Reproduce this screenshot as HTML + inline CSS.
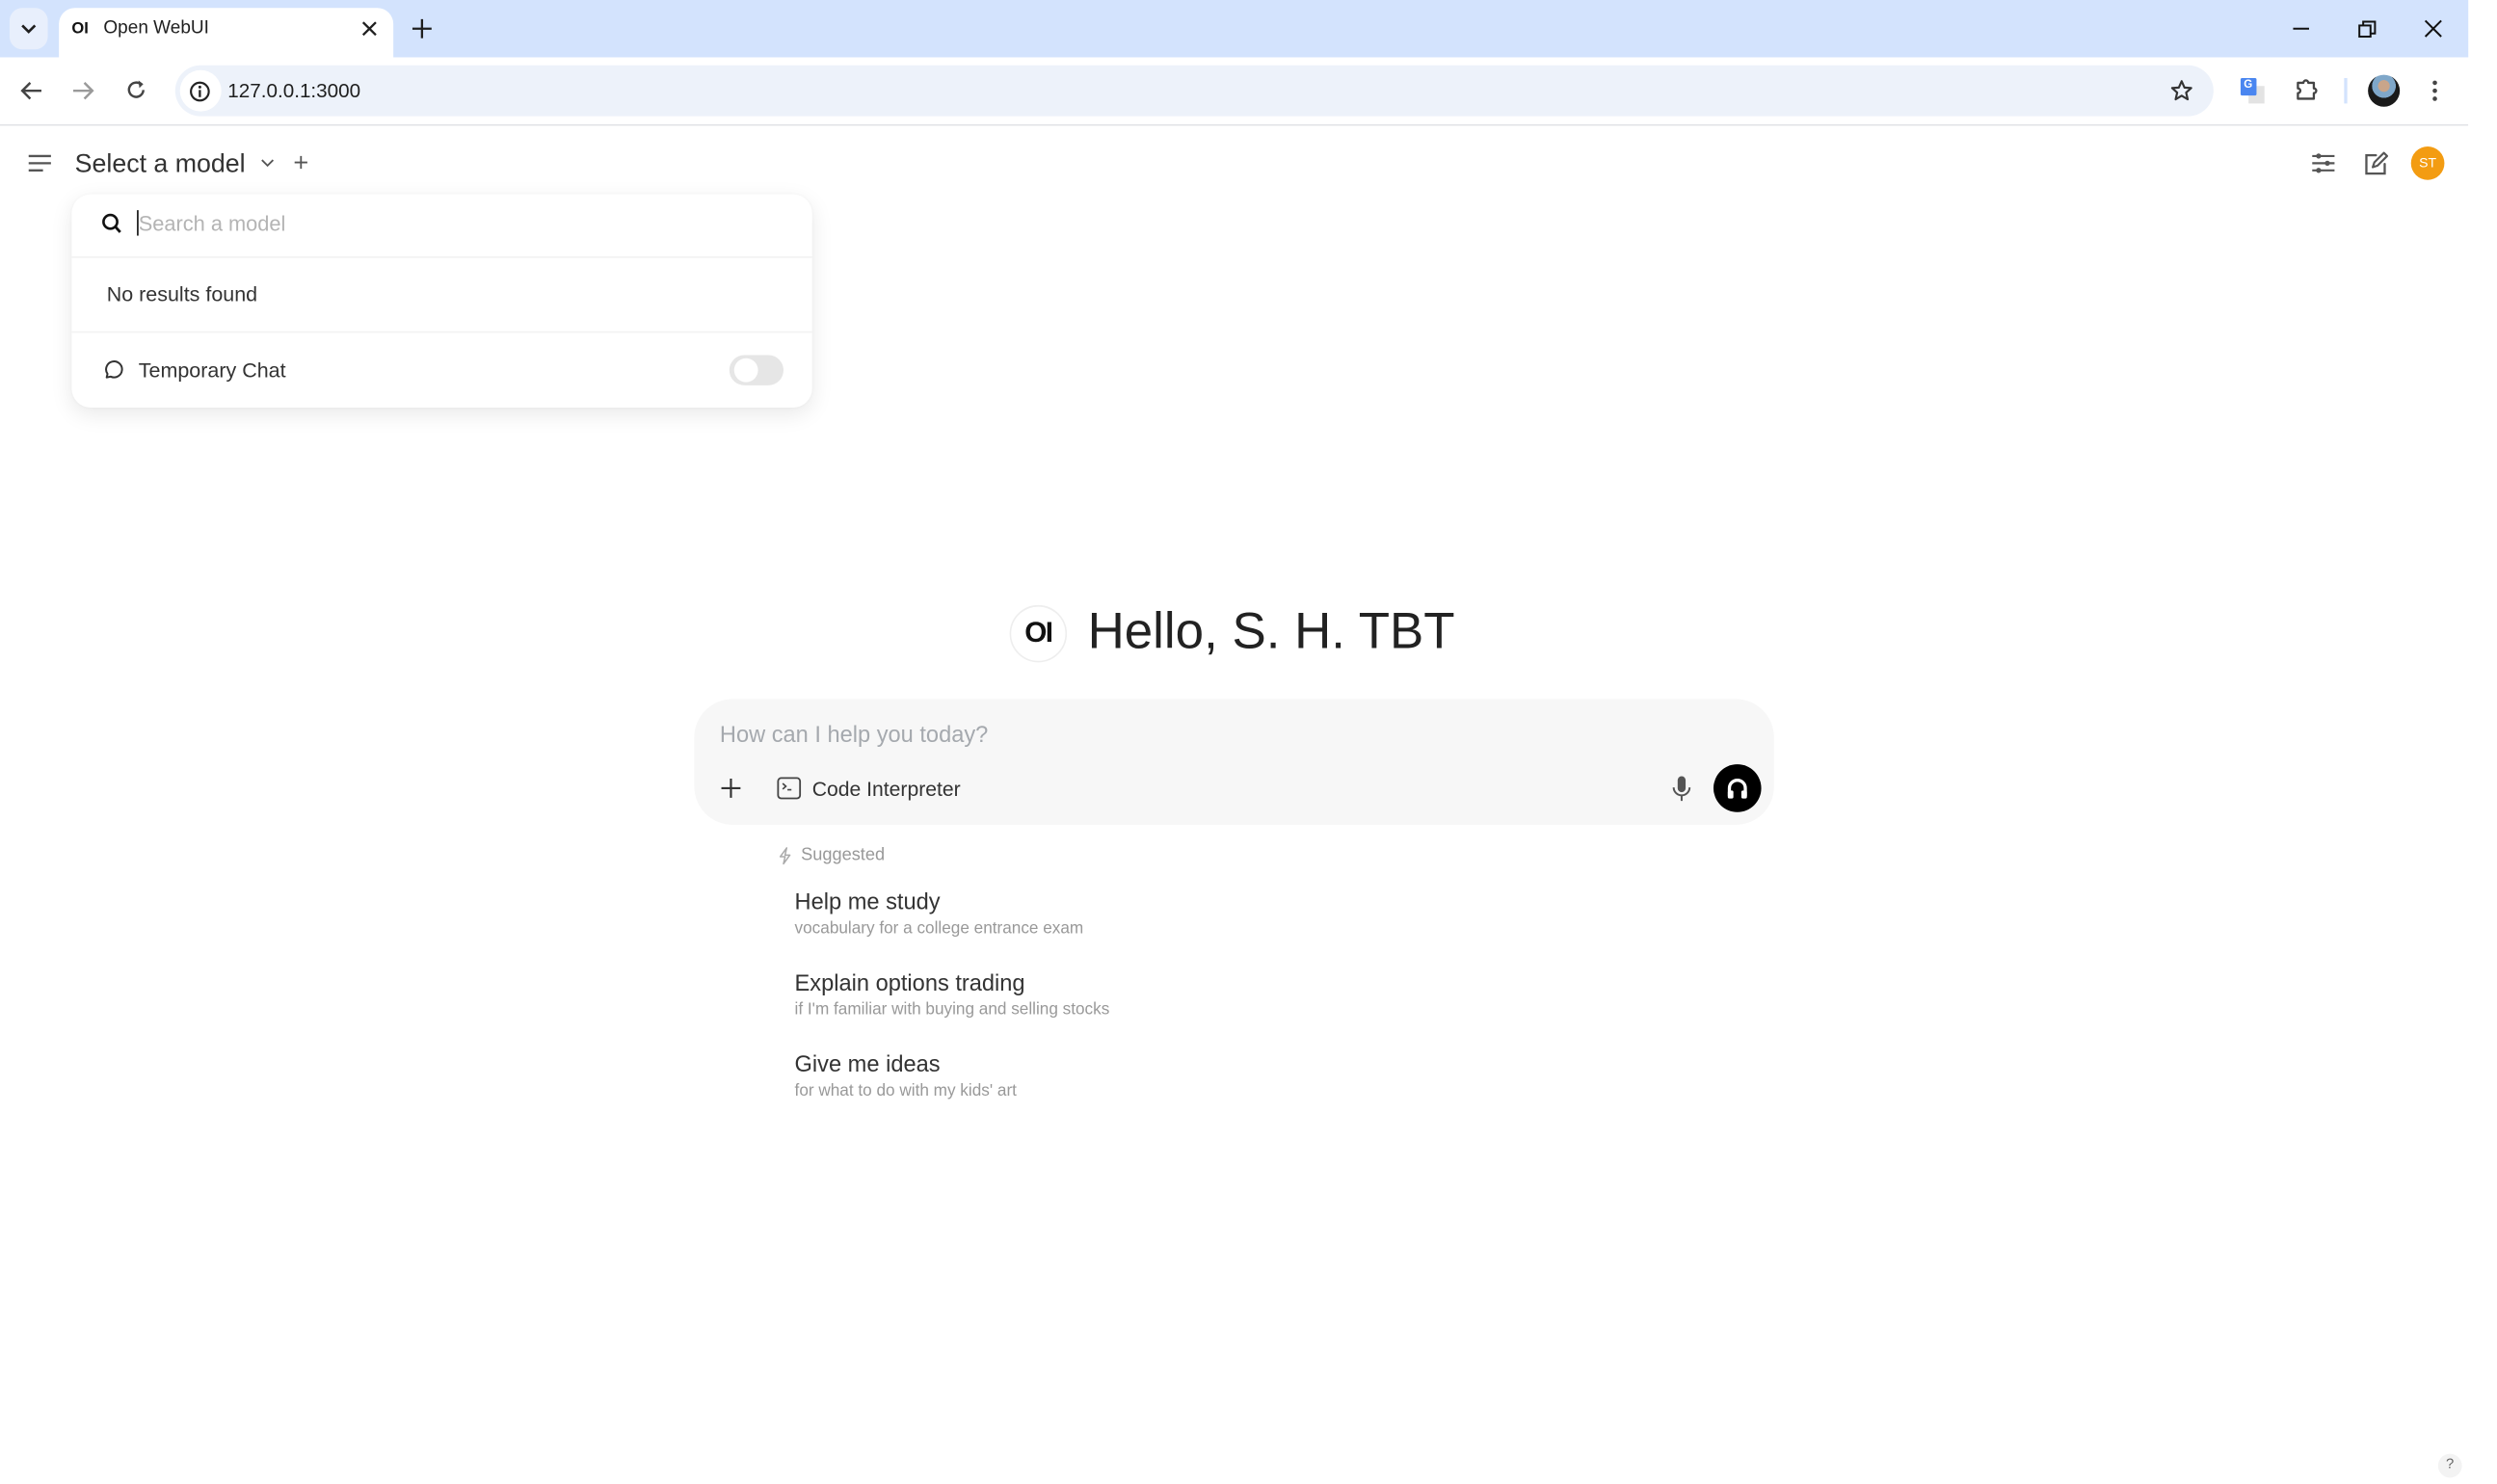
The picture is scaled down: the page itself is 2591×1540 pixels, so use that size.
<!DOCTYPE html>
<html><head><meta charset="utf-8"><style>
html,body{margin:0;padding:0;background:#fff;overflow:hidden}
body{width:2591px;height:1540px;position:relative;font-family:"Liberation Sans",Arial,sans-serif}
#w{position:absolute;left:0;top:0;width:1568px;height:932px;transform:scale(1.6524);transform-origin:0 0}
.a{position:absolute}
svg{position:absolute;overflow:visible}
.t{position:absolute;white-space:nowrap}
</style></head><body><div id="w">
<div class="a" style="left:0;top:0;width:1550px;height:36px;background:#d3e3fd"></div>
<div class="a" style="left:6px;top:5px;width:24px;height:26px;border-radius:8px;background:#e8effc"></div>
<svg style="left:13px;top:14px" width="10" height="8"><path d="M1 2 L5 6 L9 2" stroke="#1f1f1f" stroke-width="1.6" fill="none"/></svg>
<div class="a" style="left:37px;top:5px;width:210px;height:32px;background:#fff;border-radius:10px 10px 0 0"></div>
<div class="t" style="left:45px;top:13px;font-size:10px;font-weight:bold;color:#111">OI</div>
<div class="t" style="left:65px;top:12px;font-size:11.5px;color:#1f1f1f">Open WebUI</div>
<svg style="left:228px;top:14px" width="8" height="8"><path d="M0 0L8 8M8 0L0 8" stroke="#1f1f1f" stroke-width="1.4"/></svg>
<svg style="left:259px;top:12px" width="12" height="12"><path d="M6 0V12M0 6H12" stroke="#1f1f1f" stroke-width="1.4"/></svg>
<svg style="left:1440px;top:17px" width="10" height="2"><path d="M0 1H10" stroke="#111" stroke-width="1.2"/></svg>
<svg style="left:1481px;top:13px" width="11" height="11"><rect x="0.6" y="3" width="7" height="7" fill="none" stroke="#111" stroke-width="1.2"/><path d="M3 3V0.6H10.4V8H8" fill="none" stroke="#111" stroke-width="1.2"/></svg>
<svg style="left:1523px;top:13px" width="10" height="10"><path d="M0 0L10 10M10 0L0 10" stroke="#111" stroke-width="1.2"/></svg>
<div class="a" style="left:0;top:36px;width:1550px;height:42px;background:#fff;border-bottom:1px solid #e1e3e6;border-radius:8px 8px 0 0"></div>
<svg style="left:13px;top:51px" width="14" height="12"><path d="M13 6H1M6 1L1 6L6 11" stroke="#444" stroke-width="1.5" fill="none"/></svg>
<svg style="left:45px;top:51px" width="14" height="12"><path d="M1 6H13M8 1L13 6L8 11" stroke="#9a9a9a" stroke-width="1.5" fill="none"/></svg>
<svg style="left:79px;top:50px" width="13" height="13"><path d="M11 6.5A4.5 4.5 0 1 1 9.5 3" stroke="#444" stroke-width="1.5" fill="none"/><path d="M8 0.5L11 2.8L8.5 5.3Z" fill="#444"/></svg>
<div class="a" style="left:110px;top:41px;width:1280px;height:32px;border-radius:16px;background:#edf2fa"></div>
<div class="a" style="left:113px;top:44px;width:26px;height:26px;border-radius:13px;background:#fff"></div>
<svg style="left:119px;top:51px" width="13" height="13"><circle cx="6.5" cy="6.5" r="5.6" fill="none" stroke="#222" stroke-width="1.3"/><path d="M6.5 5.5V10" stroke="#222" stroke-width="1.4"/><circle cx="6.5" cy="3.7" r=".9" fill="#222"/></svg>
<div class="t" style="left:143px;top:50px;font-size:12.5px;color:#1f1f1f">127.0.0.1:3000</div>
<svg style="left:1363px;top:50px" width="14" height="14"><path d="M7 1L8.8 5L13 5.3L9.8 8.1L10.8 12.4L7 10.1L3.2 12.4L4.2 8.1L1 5.3L5.2 5Z" fill="none" stroke="#333" stroke-width="1.3" stroke-linejoin="round"/></svg>
<div class="a" style="left:1412px;top:54px;width:10px;height:11px;background:#e3e3e3"></div>
<div class="a" style="left:1407px;top:49px;width:10px;height:11px;background:#4a86f0;border-radius:1px"></div>
<div class="t" style="left:1409px;top:50px;font-size:7px;color:#fff;font-weight:bold">G</div>
<svg style="left:1441px;top:49px" width="15" height="15"><path d="M2 3H5.5A1.5 1.5 0 0 1 8.5 3H12V6.5A1.5 1.5 0 0 1 12 9.5V13H2V9.5A1.5 1.5 0 0 0 2 6.5Z" fill="none" stroke="#444" stroke-width="1.4" stroke-linejoin="round"/></svg>
<div class="a" style="left:1472px;top:49px;width:2px;height:16px;background:#d3e3fd"></div>
<div class="a" style="left:1487px;top:47px;width:20px;height:20px;border-radius:10px;background:radial-gradient(circle at 50% 35%,#c9a58a 0 22%,#7fa7c9 23% 45%,#1a1a1a 46%)"></div>
<svg style="left:1527px;top:50px" width="4" height="14"><circle cx="2" cy="2" r="1.4" fill="#444"/><circle cx="2" cy="7" r="1.4" fill="#444"/><circle cx="2" cy="12" r="1.4" fill="#444"/></svg>
<svg style="left:18px;top:97px" width="14" height="11"><path d="M0 1H14M0 5.5H14M0 10H9" stroke="#555" stroke-width="1.4"/></svg>
<div class="t" style="left:47px;top:94px;font-size:16.2px;color:#333">Select a model</div>
<svg style="left:164px;top:100px" width="8" height="5"><path d="M0.5 0.5L4 4L7.5 0.5" stroke="#555" stroke-width="1.1" fill="none"/></svg>
<svg style="left:185px;top:98px" width="8" height="8"><path d="M4 0V8M0 4H8" stroke="#555" stroke-width="1.1"/></svg>
<svg style="left:1452px;top:96px" width="14" height="13"><path d="M0 2H14M0 6.5H14M0 11H14" stroke="#555" stroke-width="1.3"/><circle cx="4" cy="2" r="1.6" fill="#555"/><circle cx="9.5" cy="6.5" r="1.6" fill="#555"/><circle cx="4" cy="11" r="1.6" fill="#555"/></svg>
<svg style="left:1484px;top:95px" width="16" height="16"><path d="M8 2.5H2V14H13.5V8" fill="none" stroke="#555" stroke-width="1.4" stroke-linecap="round"/><path d="M6 10L7 7L13 1L15 3L9 9Z" fill="none" stroke="#555" stroke-width="1.3" stroke-linejoin="round"/></svg>
<div class="a" style="left:1514px;top:92px;width:21px;height:21px;border-radius:50%;background:#f39c12"></div>
<div class="t" style="left:1514px;top:97px;width:21px;text-align:center;font-size:8.5px;color:#fff">ST</div>
<div class="a" style="left:45px;top:122px;width:465px;height:134px;background:#fff;border-radius:12px;box-shadow:0 4px 14px rgba(0,0,0,.09),0 0 3px rgba(0,0,0,.04)"></div>
<svg style="left:64px;top:134px" width="12" height="13"><circle cx="5.3" cy="5.3" r="4.3" fill="none" stroke="#111" stroke-width="1.6"/><path d="M8.5 8.5L11.5 11.8" stroke="#111" stroke-width="1.7"/></svg>
<div class="a" style="left:86px;top:132px;width:1px;height:16px;background:#111"></div>
<div class="t" style="left:87px;top:133px;font-size:13.2px;color:#b4b4b4">Search a model</div>
<div class="a" style="left:45px;top:161px;width:465px;height:1px;background:#f2f2f2"></div>
<div class="t" style="left:67px;top:177px;font-size:13px;color:#333">No results found</div>
<div class="a" style="left:45px;top:208px;width:465px;height:1px;background:#f2f2f2"></div>
<svg style="left:64px;top:226px" width="12" height="12"><path d="M3 11L3.5 8.8A5 5 0 1 1 5.5 10.5Z" fill="none" stroke="#333" stroke-width="1.2" stroke-linejoin="round"/></svg>
<div class="t" style="left:87px;top:225px;font-size:13px;color:#333">Temporary Chat</div>
<div class="a" style="left:458px;top:223px;width:34px;height:19px;border-radius:10px;background:#e6e6e6"></div>
<div class="a" style="left:461px;top:225px;width:15px;height:15px;border-radius:50%;background:#fff"></div>
<div class="a" style="left:634px;top:380px;width:34px;height:34px;border-radius:50%;border:1px solid #eee;background:#fff"></div>
<div class="t" style="left:634px;top:387px;width:36px;text-align:center;font-size:18px;font-weight:bold;color:#111;letter-spacing:-1px">OI</div>
<div class="t" style="left:683px;top:378px;font-size:32px;color:#222">Hello, S. H. TBT</div>
<div class="a" style="left:436px;top:439px;width:678px;height:79px;border-radius:24px;background:#f7f7f7"></div>
<div class="t" style="left:452px;top:454px;font-size:14.3px;color:#a5a9ae">How can I help you today?</div>
<svg style="left:453px;top:489px" width="12" height="12"><path d="M6 0V12M0 6H12" stroke="#333" stroke-width="1.3"/></svg>
<svg style="left:488px;top:488px" width="15" height="14"><rect x="0.6" y="0.6" width="13.8" height="12.8" rx="2" fill="none" stroke="#444" stroke-width="1.1"/><path d="M3.5 4L5.5 5.8L3.5 7.6M6.5 8H9" stroke="#444" stroke-width="1" fill="none"/></svg>
<div class="t" style="left:510px;top:488px;font-size:12.8px;color:#333">Code Interpreter</div>
<svg style="left:1050px;top:487px" width="12" height="17"><rect x="3.5" y="0.5" width="5" height="10" rx="2.5" fill="#555"/><path d="M1 7.5A5 5 0 0 0 11 7.5M6 12.5V16" stroke="#555" stroke-width="1.2" fill="none"/></svg>
<div class="a" style="left:1076px;top:480px;width:30px;height:30px;border-radius:50%;background:#000"></div>
<svg style="left:1083px;top:487px" width="16" height="16"><path d="M3 13V8A5 5 0 0 1 13 8V13" stroke="#fff" stroke-width="2" fill="none"/><rect x="2" y="9.5" width="3.5" height="5" rx="1" fill="#fff"/><rect x="10.5" y="9.5" width="3.5" height="5" rx="1" fill="#fff"/></svg>
<svg style="left:489px;top:532px" width="8" height="11"><path d="M5 0.5L1 6H4L3 10.5L7 5H4Z" fill="none" stroke="#aaa" stroke-width=".9" stroke-linejoin="round"/></svg>
<div class="t" style="left:503px;top:531px;font-size:11px;color:#999">Suggested</div>
<div class="t" style="left:499px;top:559px;font-size:14.3px;color:#333">Help me study</div>
<div class="t" style="left:499px;top:578px;font-size:10.4px;color:#999">vocabulary for a college entrance exam</div>
<div class="t" style="left:499px;top:610px;font-size:14.3px;color:#333">Explain options trading</div>
<div class="t" style="left:499px;top:629px;font-size:10.4px;color:#999">if I'm familiar with buying and selling stocks</div>
<div class="t" style="left:499px;top:661px;font-size:14.3px;color:#333">Give me ideas</div>
<div class="t" style="left:499px;top:680px;font-size:10.4px;color:#999">for what to do with my kids' art</div>
<div class="a" style="left:1531px;top:913px;width:15px;height:15px;border-radius:50%;background:#f3f3f3"></div>
<div class="t" style="left:1531px;top:914px;width:15px;text-align:center;font-size:9px;color:#666">?</div>
</div></body></html>
